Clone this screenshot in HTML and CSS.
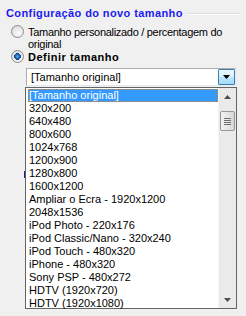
FILE: index.html
```html
<!DOCTYPE html>
<html lang="pt">
<head>
    <meta charset="UTF-8">
    <title>Configuração do novo tamanho</title>
    <link rel="stylesheet" href="styles.css">
</head>
<body>
    <div class="panel">
        <div class="group-title">
            <span class="title-text">Configuração do novo tamanho</span>
            <span class="title-line"></span>
        </div>

        <label class="option">
            <span class="radio"></span>
            <span class="option-text">Tamanho personalizado / percentagem do original</span>
        </label>
        <label class="option">
            <span class="radio checked"></span>
            <span class="option-text bold">Definir tamanho</span>
        </label>

        <div class="combo-area">
            <span class="behind-mark"></span>
            <div class="combo">
                <div class="combo-value">[Tamanho original]</div>
                <div class="combo-button">
                    <svg width="7" height="4" viewBox="0 0 7 4"><path d="M0 0h7L3.5 4z" fill="#000"/></svg>
                </div>
            </div>

            <div class="dropdown">
                <ul class="items">
                    <li class="selected">[Tamanho original]</li>
                    <li>320x200</li>
                    <li>640x480</li>
                    <li>800x600</li>
                    <li>1024x768</li>
                    <li>1200x900</li>
                    <li>1280x800</li>
                    <li>1600x1200</li>
                    <li>Ampliar o Ecra - 1920x1200</li>
                    <li>2048x1536</li>
                    <li>iPod Photo - 220x176</li>
                    <li>iPod Classic/Nano - 320x240</li>
                    <li>iPod Touch - 480x320</li>
                    <li>iPhone - 480x320</li>
                    <li>Sony PSP - 480x272</li>
                    <li>HDTV (1920x720)</li>
                    <li>HDTV (1920x1080)</li>
                </ul>
                <div class="scrollbar">
                    <div class="arrow">
                        <svg width="7" height="4" viewBox="0 0 7 4"><path d="M3.5 0L7 4H0z" fill="#4d4d4d"/></svg>
                    </div>
                    <div class="track">
                        <div class="thumb">
                            <span></span><span></span><span></span><span></span>
                        </div>
                    </div>
                    <div class="arrow">
                        <svg width="7" height="4" viewBox="0 0 7 4"><path d="M0 0h7L3.5 4z" fill="#4d4d4d"/></svg>
                    </div>
                </div>
            </div>
        </div>
    </div>
</body>
</html>
```

FILE: styles.css
```css
body {
    margin: 0;
    background-color: #f0f0f0;
    font-family: "Liberation Sans", Arial, sans-serif;
    font-size: 11px;
    color: #000;
}

.panel {
    width: 246px;
    height: 316px;
    padding: 6px 0 0 6px;
    box-sizing: border-box;
}

.group-title {
    display: flex;
    align-items: center;
    height: 14px;
}

.title-text {
    color: #1c1cf0;
    font-weight: bold;
    letter-spacing: 0.4px;
    white-space: nowrap;
}

.title-line {
    flex: 1;
    height: 1px;
    margin: 2px 6px 0 4px;
    background-color: #d5dfe5;
    border-bottom: 1px solid #fff;
}

.option {
    display: flex;
    align-items: flex-start;
    margin-left: 5px;
}

.option:first-of-type {
    margin-top: 5px;
}

.option-text {
    line-height: 12px;
    padding-top: 1px;
    width: 212px;
    margin-left: 4px;
    letter-spacing: -0.3px;
}

.option-text.bold {
    font-weight: bold;
    letter-spacing: 0.5px;
}

.radio {
    width: 11px;
    height: 11px;
    flex: none;
    border: 1px solid #8e8f8f;
    border-radius: 50%;
    background: radial-gradient(circle at 60% 65%, #fdfdfd 0%, #e3e3e3 60%, #cfcfcf 100%);
}

.radio.checked {
    background:
        radial-gradient(circle at 50% 50%, #56b0f0 0, #1d6fb8 2px, #1a3d7a 3.3px, transparent 3.6px),
        radial-gradient(circle at 60% 65%, #fdfdfd 0%, #e3e3e3 60%, #cfcfcf 100%);
}

.combo-area {
    position: relative;
    margin: 5px 0 0 20px;
    width: 210px;
}

.behind-mark {
    position: absolute;
    left: -2px;
    top: 103px;
    width: 2px;
    height: 7px;
    background-color: #1e1e8c;
}

.combo {
    display: flex;
    height: 18px;
    border: 1px solid #abadb3;
    border-right-color: #e3e9ef;
    border-bottom-color: #e3e9ef;
    background-color: #fff;
    box-sizing: border-box;
    padding: 1px;
}

.combo-value {
    flex: 1;
    padding: 1px 0 0 3px;
    line-height: 13px;
}

.combo-button {
    border: 1px solid #3c7fb1;
    border-radius: 1px;
    background: linear-gradient(#eaf6fd, #d9f0fc 50%, #bee6fd 50%, #a7d9f5);
    display: flex;
    align-items: center;
    justify-content: center;
    box-sizing: border-box;
    width: 17px;
    height: 16px;
    margin: -1px -1px 0 0;
}

.dropdown {
    position: absolute;
    left: -1px;
    top: 19px;
    width: 212px;
    height: 222px;
    display: flex;
    background-color: #fff;
    border: 1px solid #646464;
    box-sizing: border-box;
}

.items {
    list-style: none;
    margin: 0;
    padding: 1px 0 0 2px;
    flex: 1;
}

.items li {
    height: 13px;
    line-height: 13px;
    padding-left: 1px;
    white-space: nowrap;
    overflow: hidden;
}

.items li.selected {
    background-color: #3399ff;
    color: #fff;
    outline: 1px dotted #e08020;
    outline-offset: -1px;
}

.scrollbar {
    width: 17px;
    display: flex;
    flex-direction: column;
    background-color: #eaeaea;
    border-left: 1px solid #f4f4f4;
}

.arrow {
    height: 17px;
    display: flex;
    align-items: center;
    justify-content: center;
}

.track {
    flex: 1;
    padding-top: 6px;
}

.thumb {
    margin: 0 1px;
    height: 20px;
    border: 1px solid #979797;
    border-radius: 2px;
    background: linear-gradient(to right, #f2f2f2, #e6e6e6 50%, #d6d6d6);
    display: flex;
    flex-direction: column;
    align-items: center;
    justify-content: center;
    gap: 1px;
    box-sizing: border-box;
}

.thumb span {
    width: 7px;
    height: 1px;
    background-color: #707070;
}
```
